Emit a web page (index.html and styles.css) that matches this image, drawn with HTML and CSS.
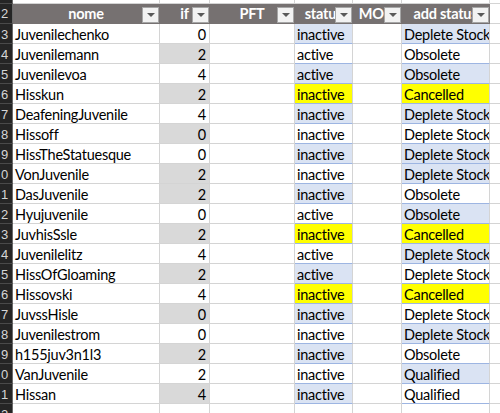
FILE: index.html
```html
<!DOCTYPE html>
<html>
<head>
<meta charset="utf-8">
<link rel="stylesheet" href="styles.css">
</head>
<body>
<div class="sheet">
  <div class="row top">
    <div class="c rh"></div><div class="c"></div><div class="c"></div><div class="c"></div><div class="c"></div><div class="c"></div><div class="c"></div><div class="c rest"></div>
  </div>
  <div class="row head">
    <div class="c rh"><span class="rn">2</span></div>
    <div class="c h">nome<span class="fb"></span></div>
    <div class="c h">if<span class="fb"></span></div>
    <div class="c h">PFT<span class="fb"></span></div>
    <div class="c h">status<span class="fb"></span></div>
    <div class="c h">MOQ<span class="fb"></span></div>
    <div class="c h">add status<span class="fb"></span></div>
    <div class="c rest"></div>
  </div>
  <div class="row"><div class="c rh"><span class="rn">3</span></div><div class="c t">Juvenilechenko</div><div class="c n">0</div><div class="c"></div><div class="c s b">inactive</div><div class="c"></div><div class="c s b">Deplete Stock</div><div class="c rest"></div></div>
  <div class="row"><div class="c rh"><span class="rn">4</span></div><div class="c t">Juvenilemann</div><div class="c n g">2</div><div class="c"></div><div class="c s">active</div><div class="c"></div><div class="c s">Obsolete</div><div class="c rest"></div></div>
  <div class="row"><div class="c rh"><span class="rn">5</span></div><div class="c t">Juvenilevoa</div><div class="c n">4</div><div class="c"></div><div class="c s b">active</div><div class="c"></div><div class="c s b">Obsolete</div><div class="c rest"></div></div>
  <div class="row"><div class="c rh"><span class="rn">6</span></div><div class="c t">Hisskun</div><div class="c n g">2</div><div class="c"></div><div class="c s y">inactive</div><div class="c"></div><div class="c s y">Cancelled</div><div class="c rest"></div></div>
  <div class="row"><div class="c rh"><span class="rn">7</span></div><div class="c t">DeafeningJuvenile</div><div class="c n">4</div><div class="c"></div><div class="c s b">inactive</div><div class="c"></div><div class="c s b">Deplete Stock</div><div class="c rest"></div></div>
  <div class="row"><div class="c rh"><span class="rn">8</span></div><div class="c t">Hissoff</div><div class="c n g">0</div><div class="c"></div><div class="c s">inactive</div><div class="c"></div><div class="c s">Deplete Stock</div><div class="c rest"></div></div>
  <div class="row"><div class="c rh"><span class="rn">9</span></div><div class="c t">HissTheStatuesque</div><div class="c n">0</div><div class="c"></div><div class="c s b">inactive</div><div class="c"></div><div class="c s b">Deplete Stock</div><div class="c rest"></div></div>
  <div class="row"><div class="c rh"><span class="rn">0</span></div><div class="c t">VonJuvenile</div><div class="c n g">2</div><div class="c"></div><div class="c s">inactive</div><div class="c"></div><div class="c s b">Deplete Stock</div><div class="c rest"></div></div>
  <div class="row"><div class="c rh"><span class="rn">1</span></div><div class="c t">DasJuvenile</div><div class="c n g">2</div><div class="c"></div><div class="c s b">inactive</div><div class="c"></div><div class="c s">Obsolete</div><div class="c rest"></div></div>
  <div class="row"><div class="c rh"><span class="rn">2</span></div><div class="c t">Hyujuvenile</div><div class="c n">0</div><div class="c"></div><div class="c s">active</div><div class="c"></div><div class="c s b">Obsolete</div><div class="c rest"></div></div>
  <div class="row"><div class="c rh"><span class="rn">3</span></div><div class="c t">JuvhisSsle</div><div class="c n g">2</div><div class="c"></div><div class="c s y">inactive</div><div class="c"></div><div class="c s y">Cancelled</div><div class="c rest"></div></div>
  <div class="row"><div class="c rh"><span class="rn">4</span></div><div class="c t">Juvenilelitz</div><div class="c n">4</div><div class="c"></div><div class="c s">active</div><div class="c"></div><div class="c s b">Deplete Stock</div><div class="c rest"></div></div>
  <div class="row"><div class="c rh"><span class="rn">5</span></div><div class="c t">HissOfGloaming</div><div class="c n g">2</div><div class="c"></div><div class="c s b">active</div><div class="c"></div><div class="c s">Deplete Stock</div><div class="c rest"></div></div>
  <div class="row"><div class="c rh"><span class="rn">6</span></div><div class="c t">Hissovski</div><div class="c n">4</div><div class="c"></div><div class="c s y">inactive</div><div class="c"></div><div class="c s y">Cancelled</div><div class="c rest"></div></div>
  <div class="row"><div class="c rh"><span class="rn">7</span></div><div class="c t">JuvssHisle</div><div class="c n g">0</div><div class="c"></div><div class="c s b">inactive</div><div class="c"></div><div class="c s">Deplete Stock</div><div class="c rest"></div></div>
  <div class="row"><div class="c rh"><span class="rn">8</span></div><div class="c t">Juvenilestrom</div><div class="c n">0</div><div class="c"></div><div class="c s">inactive</div><div class="c"></div><div class="c s b">Deplete Stock</div><div class="c rest"></div></div>
  <div class="row"><div class="c rh"><span class="rn">9</span></div><div class="c t">h155juv3n1l3</div><div class="c n g">2</div><div class="c"></div><div class="c s b">inactive</div><div class="c"></div><div class="c s">Obsolete</div><div class="c rest"></div></div>
  <div class="row"><div class="c rh"><span class="rn">0</span></div><div class="c t">VanJuvenile</div><div class="c n">2</div><div class="c"></div><div class="c s">inactive</div><div class="c"></div><div class="c s b">Qualified</div><div class="c rest"></div></div>
  <div class="row"><div class="c rh"><span class="rn">1</span></div><div class="c t">Hissan</div><div class="c n g">4</div><div class="c"></div><div class="c s b">inactive</div><div class="c"></div><div class="c s">Qualified</div><div class="c rest"></div></div>
  <div class="row"><div class="c rh"><span class="rn">2</span></div><div class="c"></div><div class="c"></div><div class="c"></div><div class="c"></div><div class="c"></div><div class="c"></div><div class="c rest"></div></div>
</div>
</body>
</html>
```
FILE: styles.css
```css
html, body {
  margin: 0;
  padding: 0;
  background: #ffffff;
}
.sheet {
  width: 500px;
  height: 413px;
  overflow: hidden;
  font-family: "Lato", "Liberation Sans", sans-serif;
  font-size: 14.5px;
  letter-spacing: -0.25px;
  color: #000000;
}
.row {
  display: grid;
  grid-template-columns: 13px 147px 50px 85px 58px 49px 88px 1fr;
  height: 20px;
}
.row.top {
  height: 4px;
}
.c {
  box-sizing: border-box;
  border-right: 1px solid #d4d4d4;
  border-bottom: 1px solid #d4d4d4;
  overflow: hidden;
  white-space: nowrap;
  line-height: 19px;
  padding-top: 1px;
  position: relative;
}
.rest {
  border-right: none;
}
.rh {
  background: #252525;
  border-right: 1px solid #6a6a6a;
  border-bottom: 1px solid #4a4a4a;
  color: #d6d6d6;
  font-family: "Liberation Sans", sans-serif;
  font-size: 13px;
  letter-spacing: 0;
}
.rn {
  display: block;
  padding-left: 1px;
}
.head .c {
  background: #767171;
  border-bottom-color: #767171;
  border-right-color: #767171;
  padding-top: 0;
}
.head .rh {
  background: #252525;
  border-bottom-color: #4a4a4a;
  border-right-color: #6a6a6a;
}
.head .rest {
  background: #ffffff;
  border-bottom-color: #d4d4d4;
}
.h {
  color: #ffffff;
  font-weight: bold;
  text-align: center;
}
.fb {
  position: absolute;
  right: 0;
  top: 3px;
  width: 17px;
  height: 16px;
  box-sizing: border-box;
  background: #f2f2f2;
  border: 1px solid #a6a6a6;
}
.fb::after {
  content: "";
  position: absolute;
  left: 4px;
  top: 5px;
  border-left: 4px solid transparent;
  border-right: 4px solid transparent;
  border-top: 4px solid #595959;
}
.t {
  padding-left: 2px;
}
.n {
  text-align: right;
  padding-right: 3px;
}
.g {
  background: #d9d9d9;
}
.s {
  padding-left: 2px;
  border-bottom-color: #9db5e2;
}
.b {
  background: #dae3f3;
}
.y {
  background: #ffff00;
}
```
